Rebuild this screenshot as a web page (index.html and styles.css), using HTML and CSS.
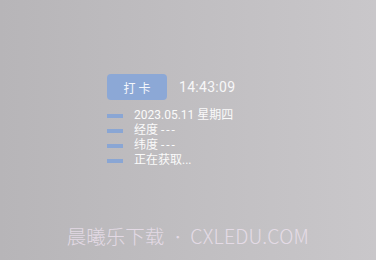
FILE: index.html
```html
<!DOCTYPE html>
<html lang="zh">
<head>
<meta charset="utf-8">
<link rel="stylesheet" href="styles.css">
</head>
<body>
<div class="screen">
  <div class="panel">
    <div class="head">
      <div class="btn">打 卡</div>
      <div class="time">14:43:09</div>
    </div>
    <ul class="list">
      <li><span class="bar"></span><span>2023.05.11 星期四</span></li>
      <li><span class="bar"></span><span>经度 <span class="dash">---</span></span></li>
      <li><span class="bar"></span><span>纬度 <span class="dash">---</span></span></li>
      <li><span class="bar"></span><span>正在获取...</span></li>
    </ul>
  </div>
  <div class="mark"><span>晨曦乐下载</span><span class="dot">•</span><span class="site">CXLEDU.COM</span></div>
</div>
</body>
</html>
```
FILE: styles.css
```css
html, body {
  margin: 0;
  padding: 0;
}
body {
  width: 376px;
  height: 260px;
  overflow: hidden;
  font-family: Roboto, "Noto Sans CJK SC", sans-serif;
  color: #fff;
}
.screen {
  width: 376px;
  height: 260px;
  box-sizing: border-box;
  background: linear-gradient(to right, #b7b5b8, #c9c7ca);
  display: flex;
  flex-direction: column;
  padding-top: 74px;
}
.panel {
  padding-left: 107px;
}
.head {
  display: flex;
  align-items: center;
  gap: 12px;
}
.btn {
  width: 60px;
  height: 26px;
  border-radius: 4px;
  background: #8ca8d6;
  display: flex;
  align-items: center;
  justify-content: center;
  font-size: 12px;
  color: #f4f6fb;
}
.time {
  font-size: 14px;
  color: #f7f7f8;
  letter-spacing: 0.3px;
}
.list {
  list-style: none;
  margin: 8px 0 0;
  padding: 0;
}
.list li {
  display: flex;
  align-items: center;
  gap: 11px;
  height: 15px;
  line-height: 15px;
  font-size: 12px;
  color: #fafafa;
}
.dash {
  letter-spacing: 2px;
}
.bar {
  width: 16px;
  height: 4px;
  background: #8aa6d4;
  flex: none;
}
.mark {
  margin-top: auto;
  margin-bottom: 10px;
  display: flex;
  justify-content: center;
  align-items: center;
  font-size: 19.5px;
  line-height: 26px;
  color: rgba(238, 226, 240, 0.8);
  font-family: "Noto Sans CJK SC", "Noto Sans", sans-serif;
  font-weight: 300;
}
.dot {
  font-size: 13px;
  margin: 3px 6px 0 7px;
}
.site {
  letter-spacing: 0.2px;
}
```
